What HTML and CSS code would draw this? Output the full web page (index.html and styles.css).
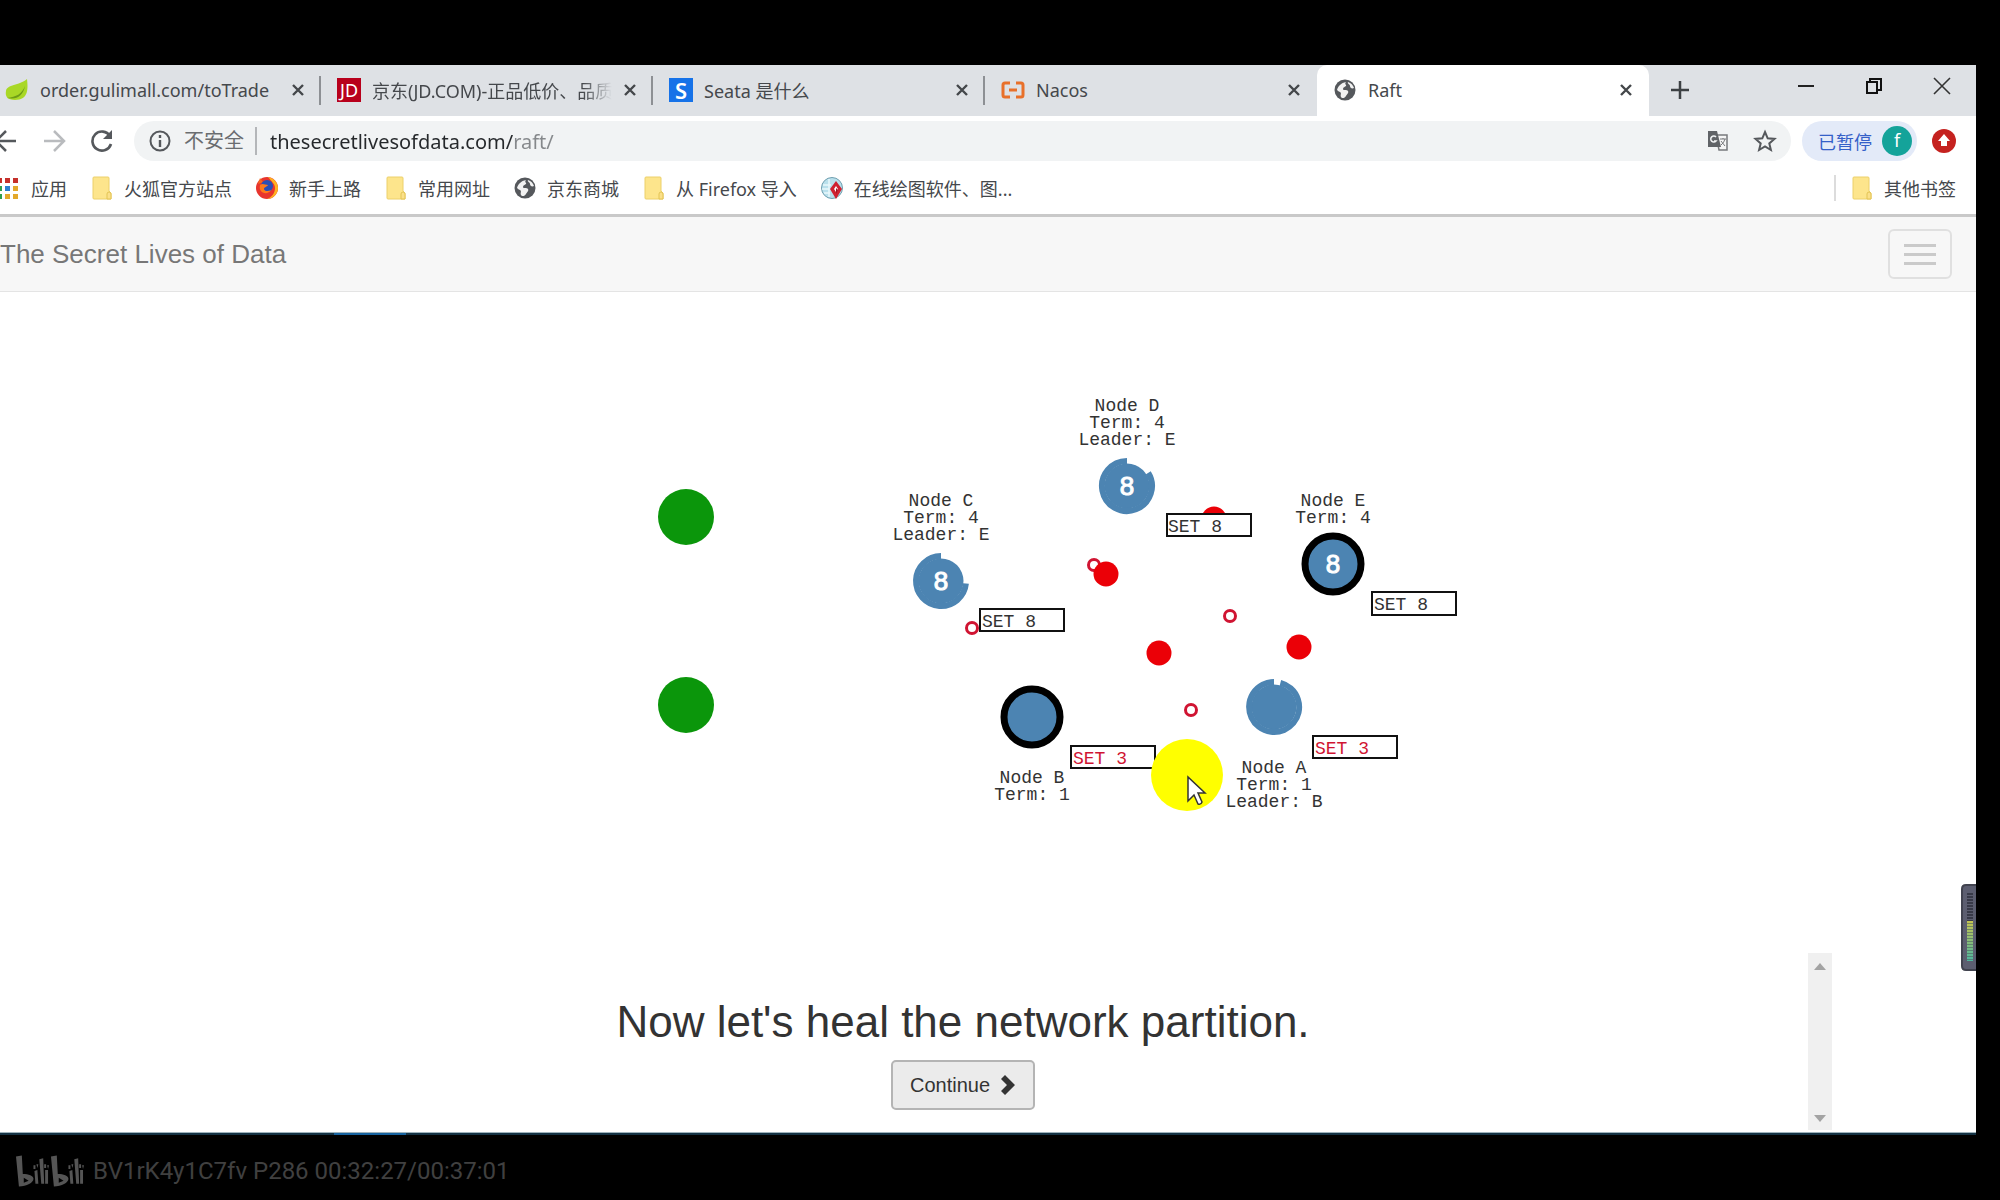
FILE: index.html
```html
<!DOCTYPE html>
<html lang="zh-CN">
<head>
<meta charset="utf-8">
<title>Raft</title>
<link rel="stylesheet" href="styles.css">
</head>
<body>
<svg class="defs" aria-hidden="true">
  <symbol id="close" viewBox="0 0 14 14"><path d="M2 2l10 10M12 2L2 12" fill="none" stroke="currentColor" stroke-width="2.4"/></symbol>
  <symbol id="folder" viewBox="0 0 24 24"><path d="M4 1h14q1 0 1 1v13l2 2v6H4q-1 0-1-1V2q0-1 1-1z" fill="#fde58c" stroke="#ecd06a"/><path d="M17 23v-5q0-2 2-2t2 2v5z" fill="#fbe08a" stroke="#e3c455"/></symbol>
  <symbol id="globe" viewBox="0 0 24 24"><circle cx="12" cy="12" r="10.500" fill="#55585c"/><path d="M4 12c1-4 4-7 9-8-2 2 1 3 0 4s-3 1-3 3 4 0 5 2-1 3-2 5-4 3-5 1 1-4-1-5-2-1-3-2zM15 4c3 1 5 3 6 6-2 1-4 0-4-2s-3-2-2-4z" fill="#f2f2f2"/></symbol>
</svg>
<main class="player">
  <section class="browser">
    <header class="tabs">
      <div class="tab tab-first">
        <svg class="fav" viewBox="0 0 24 24"><path d="M22 1c1 9 2 21-12 21C2 22 0 18 1 13 2 6 14 8 22 1z" fill="#a9d826"/><path d="M2 20c9-1 15-4 18-12-2 10-8 14-18 12z" fill="#6f9d17"/></svg>
        <a class="title" href="#order">order.gulimall.com/toTrade</a>
        <button class="close" aria-label="Close tab"><svg><use href="#close"/></svg></button>
      </div>
      <div class="tab">
        <span class="fav fav-jd">JD</span>
        <a class="title fade" href="#jd">京东(JD.COM)-正品低价、品质</a>
        <button class="close" aria-label="Close tab"><svg><use href="#close"/></svg></button>
      </div>
      <div class="tab">
        <span class="fav fav-seata">S</span>
        <a class="title" href="#seata">Seata 是什么</a>
        <button class="close" aria-label="Close tab"><svg><use href="#close"/></svg></button>
      </div>
      <div class="tab tab-last">
        <svg class="fav" viewBox="0 0 24 24"><path d="M9 5H4q-2 0-2 2v10q0 2 2 2h5M15 5h5q2 0 2 2v10q0 2-2 2h-5M8 12h8" fill="none" stroke="#e8702a" stroke-width="3"/></svg>
        <a class="title" href="#nacos">Nacos</a>
        <button class="close" aria-label="Close tab"><svg><use href="#close"/></svg></button>
      </div>
      <div class="tab tab-active">
        <svg class="fav"><use href="#globe"/></svg>
        <a class="title" href="#raft">Raft</a>
        <button class="close" aria-label="Close tab"><svg><use href="#close"/></svg></button>
      </div>
      <div class="strip-end">
        <button class="icon-button" aria-label="New tab"><svg class="icon" viewBox="0 0 24 24"><path d="M12 3v18M3 12h18" stroke="#3c4043" stroke-width="2.500"/></svg></button>
        <div class="window-buttons">
          <button class="icon-button" aria-label="Minimize"><svg class="icon" viewBox="0 0 24 24"><path d="M4 12h16" stroke="#222" stroke-width="2"/></svg></button>
          <button class="icon-button" aria-label="Restore"><svg class="icon" viewBox="0 0 24 24"><path d="M5 8h10v11H5zM8 8V5h11v11h-4" fill="none" stroke="#111" stroke-width="2"/></svg></button>
          <button class="icon-button" aria-label="Close window"><svg class="icon" viewBox="0 0 24 24"><path d="M4 4l16 16M20 4L4 20" stroke="#333" stroke-width="1.600"/></svg></button>
        </div>
      </div>
    </header>

    <div class="toolbar">
      <div class="nav-buttons">
        <button class="icon-button" aria-label="Back"><svg class="icon" viewBox="0 0 24 24"><path d="M22 12H3M12 2L2 12l10 10" fill="none" stroke="#55585c" stroke-width="2.500"/></svg></button>
        <button class="icon-button" aria-label="Forward"><svg class="icon" viewBox="0 0 24 24"><path d="M2 12h19M12 2l10 10-10 10" fill="none" stroke="#b9bbbe" stroke-width="2.500"/></svg></button>
        <button class="icon-button" aria-label="Reload"><svg class="icon" viewBox="0 0 24 24"><path d="M20 7a9.500 9.500 0 1 0 1 8" fill="none" stroke="#55585c" stroke-width="2.600"/><path d="M22 1v9h-9z" fill="#55585c"/></svg></button>
      </div>
      <div class="omnibox">
        <svg class="icon" viewBox="0 0 24 24"><circle cx="12" cy="12" r="9.500" fill="none" stroke="#55585c" stroke-width="2"/><path d="M12 6v3M12 11v7" stroke="#55585c" stroke-width="2.400"/></svg>
        <label class="insecure" for="url">不安全</label>
        <input class="url" id="url" type="text" value="thesecretlivesofdata.com/raft/">
        <button class="icon-button" aria-label="Translate"><svg class="icon" viewBox="0 0 24 24"><path d="M10 6h11v15H13z" fill="#f5f5f5" stroke="#77797c" stroke-width="1.500"/><path d="M2 2h9l4 16H2z" fill="#606367"/><path d="M10 8a3 3 0 1 0 0 4H8" fill="none" stroke="#f1f3f4" stroke-width="1.500"/><path d="M14 10h6M17 9v1M19 10q-1 4-4 6M15 12l4 5" fill="none" stroke="#77797c"/></svg></button>
        <button class="icon-button" aria-label="Bookmark"><svg class="icon" viewBox="0 0 24 24"><path d="M12 3l2.700 6.300 6.800.6-5.200 4.500 1.600 6.600L12 17.500 6.100 21l1.600-6.600L2.500 9.900l6.800-.6z" fill="none" stroke="#55585c" stroke-width="2"/></svg></button>
      </div>
      <button class="profile">已暂停 <span class="avatar">f</span></button>
      <button class="icon-button" aria-label="Update"><svg class="icon" viewBox="0 0 24 24"><circle cx="12" cy="12" r="12" fill="#c5221f"/><path d="M12 5l6 7h-3v5H9v-5H6z" fill="#fff"/></svg></button>
    </div>

    <nav class="bookmarks">
      <a href="#apps"><svg class="icon" viewBox="0 0 24 24"><path d="M0 2h5v5H0zM8 2h5v5H8zM16 2h5v5h-5z" fill="#c5302b"/><path d="M0 10h5v5H0z" fill="#2f9e4f"/><path d="M8 10h5v5H8z" fill="#2c7fd0"/><path d="M16 10h5v5h-5zM8 18h5v5H8zM16 18h5v5h-5z" fill="#e3a92c"/><path d="M0 18h5v5H0z" fill="#2f9e4f"/></svg>应用</a>
      <a href="#b1"><svg class="icon"><use href="#folder"/></svg>火狐官方站点</a>
      <a href="#b2"><svg class="icon" viewBox="0 0 24 24"><circle cx="12" cy="12" r="11" fill="#e8352e"/><path d="M13 1c6 1 10 6 10 11 0 6-5 11-11 11 5-2 8-6 8-11 0-4-3-6-7-11z" fill="#ffb21e"/><path d="M3 8l2-6 3 4z" fill="#f56a1d"/><circle cx="12" cy="10" r="6" fill="#2a4fb5"/><path d="M5 9c3-2 5 0 8 0-1 2-4 2-4 4s4 3 7 1c-2 4-8 4-10 1S5 11 5 9z" fill="#ff7a1a"/></svg>新手上路</a>
      <a href="#b3"><svg class="icon"><use href="#folder"/></svg>常用网址</a>
      <a href="#b4"><svg class="icon"><use href="#globe"/></svg>京东商城</a>
      <a href="#b5"><svg class="icon"><use href="#folder"/></svg>从 Firefox 导入</a>
      <a href="#b6"><svg class="icon" viewBox="0 0 24 24"><circle cx="12" cy="12" r="10.500" fill="#b9e0ec" stroke="#6f9fb0"/><path d="M3 9h8M2 13h7M4 17h6M9 3v18" stroke="#e9f7fb" stroke-width="1.500"/><path d="M16 5l6 8-6 10-6-10z" fill="#cf2030"/><path d="M16 10l2 3-2 3-2-3z" fill="#fff"/><path d="M16 12l2 2-2 4z" fill="#a01525"/></svg>在线绘图软件、图...</a>
      <a class="other" href="#other"><svg class="icon"><use href="#folder"/></svg>其他书签</a>
    </nav>

    <div class="navbar">
      <a class="brand" href="#home">The Secret Lives of Data</a>
      <button class="menu" aria-label="Toggle navigation"><span></span><span></span><span></span></button>
    </div>

    <div class="stage">
      <svg class="diagram" viewBox="0 292 1976 660" role="img" aria-label="Raft cluster">
        <circle class="client" cx="686" cy="517" r="28"/>
        <circle class="client" cx="686" cy="705" r="28"/>

        <circle class="reply" cx="1094" cy="565" r="5.500"/>
        <circle class="reply" cx="972" cy="628" r="5.500"/>
        <circle class="reply" cx="1230" cy="616" r="5.500"/>
        <circle class="reply" cx="1191" cy="710" r="5.500"/>
        <circle class="message" cx="1106" cy="574" r="12.500"/>
        <circle class="message" cx="1214" cy="519" r="12.500"/>
        <circle class="message" cx="1159" cy="653" r="12.500"/>
        <circle class="message" cx="1299" cy="647" r="12.500"/>

        <g transform="translate(1127 486)">
          <circle class="node" r="22.500"/><path class="timer" d="M21.200 -13.200A25 25 0 1 1 0 -25"/>
          <text class="value" y="9">8</text>
          <text class="label"><tspan x="0" y="-75">Node D</tspan><tspan x="0" y="-58">Term: 4</tspan><tspan x="0" y="-41">Leader: E</tspan></text>
          <rect class="log" x="40" y="28" width="84" height="22"/><text class="entry" x="41" y="46">SET 8</text>
        </g>
        <g transform="translate(941 581)">
          <circle class="node" r="22.500"/><path class="timer" d="M24.900 2.500A25 25 0 1 1 0 -25"/>
          <text class="value" y="9">8</text>
          <text class="label"><tspan x="0" y="-75">Node C</tspan><tspan x="0" y="-58">Term: 4</tspan><tspan x="0" y="-41">Leader: E</tspan></text>
          <rect class="log" x="39" y="28" width="84" height="22"/><text class="entry" x="41" y="46">SET 8</text>
        </g>
        <g transform="translate(1333 564)">
          <circle class="node leader" r="28"/>
          <text class="value" y="9">8</text>
          <text class="label"><tspan x="0" y="-58">Node E</tspan><tspan x="0" y="-41">Term: 4</tspan></text>
          <rect class="log" x="39" y="28" width="84" height="23"/><text class="entry" x="41" y="46">SET 8</text>
        </g>
        <g transform="translate(1274 707)">
          <circle class="node" r="22.500"/><path class="timer" d="M6.400 -24.200A25 25 0 1 1 0 -25"/>
          <text class="label"><tspan x="0" y="66">Node A</tspan><tspan x="0" y="83">Term: 1</tspan><tspan x="0" y="100">Leader: B</tspan></text>
          <rect class="log" x="39" y="29" width="84" height="22"/><text class="entry pending" x="41" y="47">SET 3</text>
        </g>
        <g transform="translate(1032 717)">
          <circle class="node leader" r="28"/>
          <text class="label"><tspan x="0" y="66">Node B</tspan><tspan x="0" y="83">Term: 1</tspan></text>
          <rect class="log" x="39" y="29" width="84" height="22"/><text class="entry pending" x="41" y="47">SET 3</text>
        </g>

        <circle cx="1187" cy="775" r="36" fill="#ff0"/>
        <path d="M1188 777v24l6-6 4 9q3 1 4-2l-4-9h7z" fill="#fff" stroke="#333" stroke-width="1.500"/>
      </svg>
      <svg class="meter" viewBox="0 0 15 87" aria-hidden="true">
        <defs><linearGradient id="level" x1="0" y1="0" x2="0" y2="1"><stop offset="0" stop-color="#c5c452"/><stop offset="1" stop-color="#4fb59f"/></linearGradient></defs>
        <path d="M15 1H5Q1 1 1 5v77q0 4 4 4h10" fill="#5c5e70" stroke="#41434f" stroke-width="2"/>
        <path d="M9 9v28" stroke="#383a48" stroke-width="6" stroke-dasharray="2 1"/>
        <rect x="6" y="37" width="6" height="40" fill="url(#level)"/>
        <path d="M9 39v38" stroke="#4b5f60" stroke-opacity=".6" stroke-width="6" stroke-dasharray="1 2"/>
      </svg>
    </div>

    <div class="slide">
      <div class="slide-body">
        <h1>Now let's heal the network partition.</h1>
        <button class="continue">Continue <svg viewBox="0 0 16 20"><path d="M5 0l10 10L5 20 1 16l6-6-6-6z" fill="#333"/></svg></button>
      </div>
      <div class="scrollbar" aria-hidden="true">
        <svg viewBox="0 0 12 8"><path d="M0 7l6-7 6 7z" fill="#a3a3a3"/></svg>
        <svg viewBox="0 0 12 8"><path d="M0 1l6 7 6-7z" fill="#a3a3a3"/></svg>
      </div>
    </div>
    <div class="taskbar"><span></span></div>
  </section>

  <footer class="watermark">
    <svg class="logo" viewBox="0 0 70 32" role="img" aria-label="bilibili">
      <g id="bili" fill="#555">
        <path d="M0 1l6-1 1 19c6 0 11 2 11 5 0 4-7 8-15 8zM8 23v5l5-2z" fill-rule="evenodd"/>
        <path d="M19 16l3-1 1 14h-3zM24 4l4-1 1 26h-3zM30 15h3v14h-3zM18 10h2v4h-2zM21 9h2l-1 4zM29 9h2v4h-2zM32 10h2l-1 4z"/>
      </g>
      <use href="#bili" x="36"/>
    </svg>
    <span>BV1rK4y1C7fv P286 00:32:27/00:37:01</span>
  </footer>
</main>
</body>
</html>
```
FILE: styles.css
```css
* { box-sizing: border-box; }

body {
  margin: 0;
  background: #000;
  color: #45484c;
  font-family: "Noto Sans", "Noto Sans CJK SC", sans-serif;
  font-size: 18px;
}

a { color: inherit; text-decoration: none; }

button {
  padding: 0;
  border: 0;
  background: none;
  font: inherit;
  color: inherit;
}

.defs { position: absolute; width: 0; height: 0; }

.icon { flex: none; width: 24px; height: 24px; display: block; }

.icon-button { flex: none; display: flex; }

.player {
  display: flex;
  flex-direction: column;
  min-height: 100vh;
  padding-top: 65px;
}

.browser {
  flex: 1;
  display: flex;
  flex-direction: column;
  margin-right: 24px;
  overflow: hidden;
  background: #fff;
}

/* Tab strip */
.tabs {
  display: flex;
  height: 51px;
  background: #dee1e5;
}

.tab {
  flex: 0 1 332px;
  min-width: 0;
  display: flex;
  align-items: center;
  gap: 11px;
  padding: 0 16px 2px 16px;
  background: linear-gradient(#8d9094, #8d9094) right 11px / 2px 29px no-repeat;
}

.tab-first { flex-basis: 321px; padding-left: 5px; }

.tab-last { background: none; }

.tab-active {
  background: #fff;
  border-radius: 10px 10px 0 0;
}

.fav { flex: none; width: 24px; height: 24px; }

.fav-jd, .fav-seata {
  display: grid;
  place-items: center;
  color: #fff;
  background: #b8001c;
  line-height: 24px;
}

.fav-seata { background: #1672e8; font-size: 22px; font-weight: 600; }

.title {
  flex: 1;
  min-width: 0;
  overflow: hidden;
  white-space: nowrap;
}

.fade { mask-image: linear-gradient(90deg, #000 88%, transparent); }

.close { flex: none; display: flex; color: #44474a; }

.close svg { width: 14px; height: 14px; }

.strip-end {
  flex: 1;
  display: flex;
  justify-content: space-between;
  padding: 13px 22px 0 19px;
}

.window-buttons { display: flex; gap: 44px; margin-top: -4px; }

/* Toolbar */
.toolbar {
  display: flex;
  align-items: center;
  gap: 11px;
  padding: 5px 20px 5px 0;
}

.toolbar > .icon-button { margin-left: 4px; }

.nav-buttons {
  display: flex;
  gap: 24px;
  margin-left: -6px;
  margin-right: 9px;
}

.omnibox {
  flex: 1;
  display: flex;
  align-items: center;
  height: 40px;
  padding: 0 14px;
  border-radius: 20px;
  background: #f1f3f4;
}

.omnibox .icon-button { margin-left: 23px; }

.insecure {
  margin-left: 12px;
  padding-right: 11px;
  border-right: 2px solid #b4b6b9;
  color: #6a6d70;
  font-size: 20px;
  line-height: 28px;
}

.url {
  flex: 1;
  min-width: 0;
  padding: 0;
  margin-left: 13px;
  border: 0;
  font: inherit;
  font-size: 20px;
  color: transparent;
  background: linear-gradient(90deg, #25282b 244px, #85888b 244px);
  background-clip: text;
}

.profile {
  display: flex;
  align-items: center;
  gap: 10px;
  height: 40px;
  padding: 0 5px 0 16px;
  border-radius: 20px;
  background: #e3eaf8;
  color: #3460c8;
}

.avatar {
  width: 30px;
  height: 30px;
  border-radius: 50%;
  background: #14a39a;
  color: #fff;
  line-height: 28px;
}

/* Bookmarks */
.bookmarks {
  display: flex;
  align-items: center;
  gap: 23px;
  height: 48px;
  margin-left: -3px;
  padding-right: 20px;
  padding-bottom: 4px;
  white-space: nowrap;
}

.bookmarks a { display: flex; align-items: center; gap: 10px; }

.bookmarks .other {
  margin-left: auto;
  padding-left: 14px;
  border-left: 2px solid #dcdcdc;
}

/* Page header */
.navbar {
  display: flex;
  align-items: center;
  justify-content: space-between;
  height: 78px;
  padding-right: 24px;
  border-top: 3px solid #c9c9c9;
  border-bottom: 1px solid #e4e4e4;
  background: #f7f7f7;
  font-family: "Liberation Sans", Arial, sans-serif;
}

.brand { color: #777; font-size: 26px; }

.menu {
  display: flex;
  flex-direction: column;
  align-items: center;
  justify-content: center;
  gap: 6px;
  width: 64px;
  height: 50px;
  border: 2px solid #e0e0e0;
  border-radius: 6px;
}

.menu span { width: 32px; height: 3px; background: #cacaca; }

/* Cluster diagram */
.stage { position: relative; flex: 1; }

.diagram { display: block; width: 100%; }

.client { fill: #0b960b; }

.message { fill: #eb0007; }

.reply { fill: #fff; stroke: #d01432; stroke-width: 3px; }

.node { fill: #4c84b2; }

.leader { stroke: #000; stroke-width: 7px; }

.timer { fill: none; stroke: #4c84b2; stroke-width: 6px; }

.value {
  fill: #fff;
  stroke: #fff;
  font: 26px "Liberation Sans", Arial, sans-serif;
  text-anchor: middle;
}

.label, .entry {
  fill: #333;
  font: 18px "Liberation Mono", "Courier New", monospace;
}

.label { text-anchor: middle; }

.entry.pending { fill: #d01432; }

.log { fill: #fff; stroke: #111; stroke-width: 2px; }

.meter {
  position: absolute;
  right: 0;
  bottom: -18px;
  width: 15px;
  height: 87px;
}

/* Slide text */
.slide {
  display: flex;
  height: 179px;
  padding: 0 144px 2px 118px;
  color: #333;
  font-family: "Liberation Sans", Arial, sans-serif;
}

.slide-body { flex: 1; text-align: center; }

.slide h1 {
  margin: 44px 0 13px;
  font-size: 44px;
  line-height: 50px;
  font-weight: 400;
}

.continue {
  display: inline-flex;
  align-items: center;
  gap: 10px;
  height: 50px;
  padding: 0 17px;
  border: 2px solid #b4b4b4;
  border-radius: 5px;
  background: #ebebeb;
  font-size: 20px;
}

.continue svg { width: 16px; height: 20px; }

.scrollbar {
  display: flex;
  flex-direction: column;
  align-items: center;
  justify-content: space-between;
  width: 24px;
  padding: 10px 0 8px;
  background: #f0f0f0;
}

.scrollbar svg { width: 12px; height: 8px; }

.taskbar { height: 3px; border-top: 1px solid #9fb3bb; background: #143244; }

.taskbar span { display: block; width: 72px; height: 2px; margin-left: 334px; background: #1763a0; }

/* Video caption */
.watermark {
  display: flex;
  align-items: center;
  gap: 9px;
  height: 65px;
  padding: 6px 16px 0;
  color: #404040;
  font-family: Roboto, sans-serif;
  font-size: 24px;
}

.logo { width: 68px; height: 32px; }
```
